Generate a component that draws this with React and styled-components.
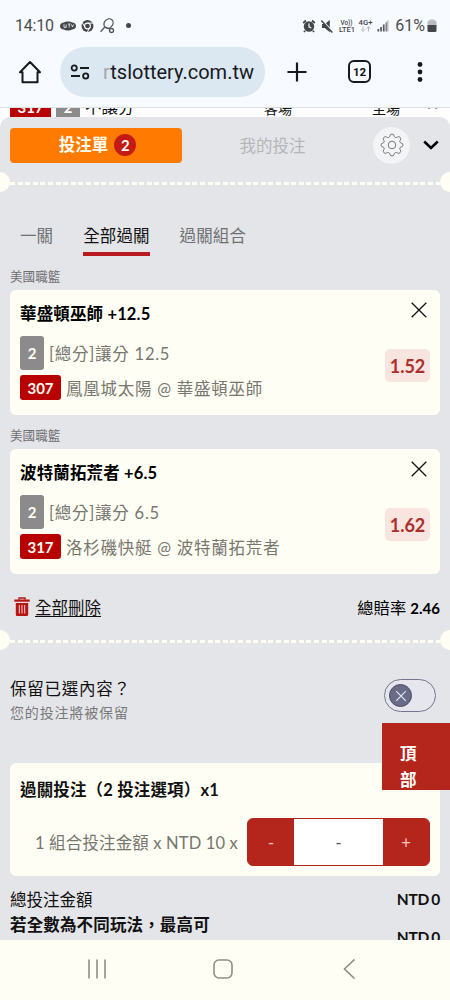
import React from 'react';
import styled, { createGlobalStyle } from 'styled-components';

const picks = [
  { league: '美國職籃', title: '華盛頓巫師 +12.5', market: '[總分]讓分 12.5', code: '307', game: '鳳凰城太陽 @ 華盛頓巫師', odds: '1.52' },
  { league: '美國職籃', title: '波特蘭拓荒者 +6.5', market: '[總分]讓分 6.5', code: '317', game: '洛杉磯快艇 @ 波特蘭拓荒者', odds: '1.62' },
];

const App = () => {
  return (
    <Phone>
      <GlobalStyle />
      <StatusBar>
        <Clock>14:10</Clock>
        <StatusIcons />
        <Signals />
        <Percent>61%</Percent>
        <Battery />
      </StatusBar>

      <BrowserBar>
        <HomeIcon />
        <UrlPill>
          <TuneIcon />
          <UrlText>
            <span>r</span>tslottery.com.tw
          </UrlText>
        </UrlPill>
        <PlusIcon />
        <TabCount>12</TabCount>
        <MoreIcon />
      </BrowserBar>

      <Page>
        <BehindRow>
          <BehindCode>317</BehindCode>
          <BehindNum>2</BehindNum>
          <BehindName>不讓分</BehindName>
          <BehindSide>客場</BehindSide>
          <BehindSide $last>主場</BehindSide>
          <BehindMarks width="14" height="10" viewBox="0 0 14 10">
            <path d="M2 .8h2.4M9 .8h2.4" stroke="#444" strokeWidth="1.4" />
          </BehindMarks>
        </BehindRow>

        <Sheet>
          <SheetHead>
            <SlipButton>
              投注單
              <CountBadge>2</CountBadge>
            </SlipButton>
            <MyBets>我的投注</MyBets>
            <GearButton>
              <GearIcon />
            </GearButton>
            <ChevronIcon />
          </SheetHead>
          <TearLine />

          <Tabs>
            <Tab>一關</Tab>
            <Tab $active>全部過關</Tab>
            <Tab>過關組合</Tab>
          </Tabs>

          {picks.map((pick) => (
            <Pick key={pick.code} {...pick} />
          ))}

          <ActionRow>
            <TrashIcon />
            <ClearAll>全部刪除</ClearAll>
            <TotalOdds>
              總賠率 <b>2.46</b>
            </TotalOdds>
          </ActionRow>
          <TearLine />

          <KeepRow>
            <div>
              <KeepTitle>保留已選內容？</KeepTitle>
              <KeepHint>您的投注將被保留</KeepHint>
            </div>
            <Toggle>
              <Knob>
                <svg width="12" height="12" viewBox="0 0 12 12">
                  <path d="M1.2 1.2l9.6 9.6M10.8 1.2l-9.6 9.6" stroke="#e6e7f2" strokeWidth="1.2" />
                </svg>
              </Knob>
            </Toggle>
          </KeepRow>

          <StakeCard>
            <StakeTitle>過關投注（2 投注選項）x1</StakeTitle>
            <StakeRow>
              <StakeLabel>1 組合投注金額 x NTD 10 x</StakeLabel>
              <Stepper>
                <StepButton>-</StepButton>
                <StepValue>-</StepValue>
                <StepButton>+</StepButton>
              </Stepper>
            </StakeRow>
          </StakeCard>

          <TotalRow>
            <span>總投注金額</span>
            <Amount>NTD 0</Amount>
          </TotalRow>
          <TotalRow $strong>
            <span>若全數為不同玩法，最高可</span>
            <Amount $low>NTD 0</Amount>
          </TotalRow>
        </Sheet>
        <TopButton>
          <span>頂</span>
          <span>部</span>
        </TopButton>
      </Page>

      <NavBar>
        <svg width="20" height="20" viewBox="0 0 20 20">
          <path d="M2 .5v19M10 .5v19M18 .5v19" stroke="#8e8d87" strokeWidth="1.6" />
        </svg>
        <svg width="20" height="20" viewBox="0 0 20 20">
          <rect x="1" y="1" width="18" height="18" rx="5" fill="none" stroke="#8e8d87" strokeWidth="1.6" />
        </svg>
        <svg width="20" height="20" viewBox="0 0 20 20">
          <path d="M15.500.5L5.500 10l10 9.500" fill="none" stroke="#8e8d87" strokeWidth="1.6" />
        </svg>
      </NavBar>
    </Phone>
  );
};

const Pick = ({ league, title, market, code, game, odds }) => {
  return (
    <>
      <League>{league}</League>
      <Card>
        <CardMain>
          <CardTitle>{title}</CardTitle>
          <MarketLine>
            <Tag>2</Tag>
            <span>{market}</span>
          </MarketLine>
          <GameLine>
            <Tag $red>{code}</Tag>
            <span>{game}</span>
          </GameLine>
        </CardMain>
        <CardSide>
          <svg width="16" height="16" viewBox="0 0 16 16">
            <path d="M.7.7l14.6 14.6M15.3.7L.7 15.3" stroke="#111" strokeWidth="1.3" />
          </svg>
          <Odds>{odds}</Odds>
        </CardSide>
      </Card>
    </>
  );
};

const StatusIcons = () => (
  <svg width="74" height="20" viewBox="0 0 74 20">
    <path d="M0 10c0-2.5 2-3.5 4-3.6C6 5.200 10 5.200 12 6.400c2.500.1 4 1.400 4 3.600s-1.500 3.500-4 3.600c-2 1.300-6 1.300-8 0-2.500-.1-4-1.300-4-3.600z" fill="#454649" />
    <path d="M4 8.200v3.200h2.200V8.500M8 8h2.500M9.200 8v3.500M11.500 8.500l1 2.500 1-2.500" stroke="#e8ebef" fill="none" strokeWidth=".9" />
    <circle cx="27.500" cy="10" r="6" fill="#454649" />
    <circle cx="27.500" cy="10" r="2.900" fill="#454649" stroke="#f7faff" strokeWidth="1.100" />
    <path d="M27.500 7.100h5.700M25 11.500l-2.800-5M30 11.500l-2.800 4.900" stroke="#f7faff" strokeWidth="1" />
    <g fill="none" stroke="#55565a" strokeWidth="1.300">
      <ellipse cx="48.500" cy="7.500" rx="5" ry="4.200" transform="rotate(-48 48.500 7.500)" />
      <path d="M44.600 11.300l-4 4.400M45 11.200l5 2" />
      <circle cx="51.500" cy="14.500" r="2" />
    </g>
    <circle cx="68.500" cy="9.500" r="2.500" fill="#454649" />
  </svg>
);

const Signals = () => (
  <SignalSvg width="90" height="20" viewBox="0 0 90 20">
    <circle cx="7" cy="10.500" r="5.200" fill="#454649" />
    <path d="M1.200 7L4 4.500M12.800 7L10 4.500M3 14.800l-1 1.200M11 14.800l1 1.200" stroke="#454649" strokeWidth="1.800" />
    <path d="M7 7.500v3.300l2.300 1.300" stroke="#f7faff" strokeWidth="1.200" fill="none" />
    <path d="M20 8h2.800l5-4v12.300l-5-4.300H20z" fill="#454649" />
    <path d="M20 4l11 12" stroke="#f7faff" strokeWidth="1.400" />
    <path d="M19.300 4.500l11 12" stroke="#454649" strokeWidth="1.500" />
    <g fill="#454649" fontFamily="Roboto, sans-serif" fontWeight="500">
      <text x="38.500" y="9" fontSize="7.500" textLength="12" lengthAdjust="spacingAndGlyphs">Vo))</text>
      <text x="37" y="15.800" fontSize="7.500" textLength="16" lengthAdjust="spacingAndGlyphs">LTE1</text>
      <text x="56.500" y="9" fontSize="7.500" textLength="14" lengthAdjust="spacingAndGlyphs">4G+</text>
    </g>
    <path d="M61 10.500v4.800m-2-2l2 2 2-2M66.500 15.500v-4.800m-2 2l2-2 2 2" stroke="#b5b8bd" fill="none" strokeWidth="1" />
    <path d="M75.500 13h1.700v2.500h-1.700zM78.200 11h1.700v4.500h-1.700zM80.900 8.500h1.700v7h-1.700zM83.600 6.500h1.200v9h-1.200z" fill="#57585c" />
    <path d="M84.800 5l1.700-1v11.500h-1.700z" fill="#b9bcc1" />
  </SignalSvg>
);

const Battery = () => (
  <svg width="10" height="14" viewBox="0 0 10 14">
    <path d="M.5 3Q.5 1.500 2 1.500h.8V.5h4.400v1H8q1.500 0 1.500 1.500v4h-9z" fill="#b9bcc1" />
    <path d="M.5 6h9v5.500Q9.500 13 8 13H2Q.5 13 .5 11.500z" fill="#454649" />
  </svg>
);

const HomeIcon = () => (
  <svg width="24" height="24" viewBox="0 0 24 24">
    <path d="M4.500 12.200H2L12 2l10 10.200h-2.500v10h-15z" fill="none" stroke="#17191c" strokeWidth="2" strokeLinejoin="round" />
  </svg>
);

const TuneIcon = () => (
  <svg width="20" height="16" viewBox="0 0 20 16">
    <g fill="none" stroke="#17191c" strokeWidth="1.800">
      <circle cx="4.200" cy="4" r="2.600" />
      <path d="M10 4h9M1 12h9" />
      <circle cx="15.700" cy="12" r="2.600" />
    </g>
  </svg>
);

const PlusIcon = () => (
  <PlusSvg width="20" height="20" viewBox="0 0 20 20">
    <path d="M10 .5v19M.5 10h19" stroke="#17191c" strokeWidth="2.200" />
  </PlusSvg>
);

const MoreIcon = () => (
  <MoreSvg width="6" height="22" viewBox="0 0 6 22">
    <circle cx="3" cy="3.500" r="2.400" />
    <circle cx="3" cy="11" r="2.400" />
    <circle cx="3" cy="18.500" r="2.400" />
  </MoreSvg>
);

const GearIcon = () => (
  <svg width="24" height="24" viewBox="0 0 24 24" fill="none" stroke="#77787b" strokeWidth="1">
    <path d="M9.800 3.200Q10 1 12 1t2.200 2.200Q14.400 4.200 15.400 4.500t1.700-.3q1.700-1.200 3 .1t.1 3q-.7.800-.3 1.700t1.100 1Q23 10.200 23 12t-2 2q-.800.1-1.100 1t.3 1.700q1.200 1.700-.1 3t-3 .1q-.8-.600-1.700-.2t-1.200 1.200Q14 23 12 23t-2.200-2.200q-.2-.8-1.200-1.200t-1.700.2q-1.700 1.200-3-.1t-.1-3q.6-.8.3-1.700t-1.100-1Q1 13.800 1 12t2-2q.8-.1 1.100-1t-.3-1.700q-1.200-1.700.1-3t3-.1q.700.600 1.700.3t1.200-1.300z" />
    <circle cx="12" cy="12" r="3.800" />
  </svg>
);

const ChevronIcon = () => (
  <ChevronSvg width="16" height="10" viewBox="0 0 16 10">
    <path d="M1.200 1.500L8 8l6.800-6.500" fill="none" stroke="#000" strokeWidth="2.500" />
  </ChevronSvg>
);

const TrashIcon = () => (
  <svg width="16" height="20" viewBox="0 0 16 20">
    <path d="M5 2.800V1h6v1.800" fill="none" stroke="#b81414" strokeWidth="1.400" />
    <path d="M.3 2.500h15.400v2.300H.300zM1.800 6h12.400v11.500q0 1.500-1.500 1.500H3.300q-1.500 0-1.500-1.500z" fill="#b81414" />
    <path d="M5.300 8v8.500M8 8v8.500M10.700 8v8.500" stroke="#f3d0d0" strokeWidth="1" />
  </svg>
);

const TearLine = () => (
  <Tear>
    <TearEnd />
    <TearDash />
    <TearEnd $right />
  </Tear>
);

const GlobalStyle = createGlobalStyle`
  * {
    box-sizing: border-box;
  }
  body {
    margin: 0;
    font-family: Lato, 'Noto Sans CJK TC', sans-serif;
    font-size: 16.5px;
    line-height: 24px;
    color: #111;
  }
  svg {
    display: block;
    flex: none;
  }
`;

const Phone = styled.div`
  width: 450px;
  height: 1000px;
  overflow: hidden;
  display: flex;
  flex-direction: column;
  background: #f7faff;
`;

const StatusBar = styled.div`
  height: 46px;
  padding: 5px 13px 0 15px;
  display: flex;
  align-items: center;
  font-family: Roboto, sans-serif;
  color: #4c4d50;
`;

const Clock = styled.span`
  width: 45px;
  font-size: 16px;
  letter-spacing: -0.2px;
`;

const SignalSvg = styled.svg`
  margin-left: auto;
`;

const Percent = styled.span`
  margin: 0 2px 0 3px;
  font-size: 16px;
`;

const BrowserBar = styled.div`
  height: 62px;
  padding: 1px 27px 11px 18px;
  display: flex;
  align-items: center;
  border-bottom: 1px solid #dcdfe3;
`;

const UrlPill = styled.div`
  width: 205px;
  height: 50px;
  margin-left: 18px;
  padding: 0 10px;
  display: flex;
  align-items: center;
  border-radius: 25px;
  background: #dbe7f1;
`;

const UrlText = styled.div`
  margin-left: 13px;
  font: 20px Roboto, sans-serif;
  color: #17191c;
  white-space: nowrap;

  span {
    color: #9da8b2;
  }
`;

const PlusSvg = styled.svg`
  margin-left: 22px;
`;

const TabCount = styled.div`
  width: 23px;
  height: 23px;
  margin-left: 41px;
  display: flex;
  align-items: center;
  justify-content: center;
  border: 2px solid #17191c;
  border-radius: 6px;
  font: 700 11.5px Roboto, sans-serif;
`;

const MoreSvg = styled.svg`
  margin-left: auto;
  fill: #17191c;
`;

const Page = styled.div`
  position: relative;
  flex: 1;
  min-height: 0;
  overflow: hidden;
  background: #fff;
`;

const BehindRow = styled.div`
  height: 9px;
  padding-left: 10px;
  display: flex;
  align-items: flex-end;
  overflow: hidden;
  line-height: 25px;
`;

const BehindCode = styled.div`
  width: 41px;
  height: 25px;
  flex: none;
  background: #b90000;
  color: #fff;
  font-size: 15px;
  font-weight: 700;
  text-align: center;
  line-height: 30px;
`;

const BehindNum = styled(BehindCode)`
  width: 24px;
  margin-left: 5px;
  background: #8b8b8b;
`;

const BehindName = styled.div`
  width: 179px;
  margin: 0 0 -3px 5px;
`;

const BehindSide = styled.div`
  width: ${({ $last }) => ($last ? '52px' : '108px')};
  margin-bottom: -4px;
  font-size: 14px;
`;

const BehindMarks = styled.svg`
  margin-left: 2px;
`;

const Sheet = styled.div`
  height: 840px;
  border-radius: 10px 10px 0 0;
  background: #e4e5e8;
`;

const SheetHead = styled.div`
  height: 55px;
  padding: 1px 11px 0 10px;
  display: flex;
  align-items: center;
`;

const SlipButton = styled.div`
  width: 172px;
  height: 35px;
  padding-left: 3px;
  display: flex;
  align-items: center;
  justify-content: center;
  gap: 6px;
  border-radius: 4px;
  background: #ff7a00;
  color: #fffef4;
  font-weight: 700;
`;

const CountBadge = styled.span`
  width: 22px;
  height: 22px;
  border-radius: 50%;
  background: #c41a16;
  font-size: 15px;
  line-height: 22px;
  text-align: center;
`;

const MyBets = styled.div`
  width: 181px;
  padding-top: 1px;
  text-align: center;
  color: #b5b6b8;
`;

const GearButton = styled.div`
  width: 37px;
  height: 37px;
  margin-left: 10px;
  display: flex;
  align-items: center;
  justify-content: center;
  border-radius: 50%;
  background: #f3f4f6;
`;

const ChevronSvg = styled.svg`
  margin-left: auto;
`;

const Tear = styled.div`
  height: 20px;
  display: flex;
  align-items: center;
`;

const TearEnd = styled.div`
  width: 10px;
  height: 20px;
  background: #fffef4;
  border-radius: ${({ $right }) => ($right ? '10px 0 0 10px' : '0 10px 10px 0')};
`;

const TearDash = styled.div`
  flex: 1;
  height: 3px;
  margin-top: 3px;
  background: repeating-linear-gradient(90deg, #fffef4 0 5px, transparent 5px 7.6px);
`;

const Tabs = styled.div`
  height: 64px;
  padding-left: 20px;
  display: flex;
  align-items: flex-end;
  gap: 30px;
`;

const Tab = styled.div`
  height: 33px;
  padding-top: 1px;
  letter-spacing: 0.1px;
  color: ${({ $active }) => ($active ? '#111' : '#6f7073')};
  border-bottom: 4px solid ${({ $active }) => ($active ? '#b81a22' : 'transparent')};
`;

const League = styled.div`
  height: 34px;
  padding: 14px 10px 0;
  font-size: 12.6px;
  line-height: 14px;
  color: #6f7073;
`;

const Card = styled.div`
  height: 125px;
  margin: 0 10px;
  padding: 10px;
  display: flex;
  justify-content: space-between;
  border-radius: 6px;
  background: #fffef4;
`;

const CardMain = styled.div`
  display: flex;
  flex-direction: column;
  align-items: flex-start;
`;

const CardTitle = styled.div`
  height: 36px;
  line-height: 29px;
  font-weight: 700;
  letter-spacing: 0.15px;
  color: #000;
`;

const MarketLine = styled.div`
  height: 34px;
  display: flex;
  align-items: center;
  gap: 5px;
  color: #77766f;
  letter-spacing: 0.75px;

  span:last-child {
    padding-top: 2px;
  }
`;

const GameLine = styled(MarketLine)`
  height: 25px;
  margin-top: 5px;
`;

const Tag = styled.span`
  align-self: stretch;
  width: ${({ $red }) => ($red ? '41px' : '24px')};
  display: flex;
  align-items: center;
  justify-content: center;
  border-radius: 3px;
  background: ${({ $red }) => ($red ? '#b90000' : '#8b8b8b')};
  color: #fffef4;
  font-size: 15px;
  font-weight: 700;
  letter-spacing: 0;
`;

const CardSide = styled.div`
  padding-top: 2px;
  display: flex;
  flex-direction: column;
  align-items: flex-end;
  justify-content: flex-start;

  svg {
    margin-right: 3px;
  }
`;

const Odds = styled.div`
  width: 45px;
  height: 33px;
  margin-top: 31px;
  border-radius: 5px;
  background: #f8e5df;
  color: #ab2f2b;
  font-size: 18px;
  font-weight: 700;
  line-height: 34px;
  text-align: center;
`;

const ActionRow = styled.div`
  height: 56px;
  padding: 12px 10px 0 14px;
  display: flex;
  align-items: center;

  svg {
    margin-top: -2px;
  }
`;

const ClearAll = styled.span`
  margin-left: 5px;
  text-decoration: underline;
  text-underline-offset: 2px;
`;

const TotalOdds = styled.span`
  margin-left: auto;
  color: #000;
  font-size: 16.3px;

  b {
    font-size: 15px;
  }
`;

const KeepRow = styled.div`
  height: 113px;
  padding: 27px 14px 0 10px;
  display: flex;
  justify-content: space-between;
`;

const KeepTitle = styled.div`
  letter-spacing: 0.75px;
`;

const KeepHint = styled.div`
  font-size: 14px;
  letter-spacing: 0.85px;
  color: #77787a;
`;

const Toggle = styled.div`
  width: 52px;
  height: 33px;
  margin-top: 2px;
  padding-left: 4px;
  display: flex;
  align-items: center;
  border: 1px solid #74758c;
  border-radius: 17px;
  background: #e6e7ee;
`;

const Knob = styled.div`
  width: 23px;
  height: 23px;
  display: flex;
  align-items: center;
  justify-content: center;
  border: 1px solid #4a4b68;
  border-radius: 50%;
  background: #6a6b87;
`;

const StakeCard = styled.div`
  height: 113px;
  margin: 0 10px;
  padding: 15px 10px 0;
  border-radius: 6px;
  background: #fffef4;
`;

const StakeTitle = styled.div`
  height: 40px;
  font-weight: 700;
  letter-spacing: 0.15px;
`;

const StakeRow = styled.div`
  display: flex;
  align-items: center;
  justify-content: flex-end;
  gap: 9px;
`;

const StakeLabel = styled.span`
  padding-top: 1px;
  color: #77766f;
  white-space: nowrap;
  letter-spacing: 0.15px;
`;

const Stepper = styled.div`
  width: 183px;
  height: 48px;
  display: flex;
  border: 1px solid #b4261c;
  border-radius: 6px;
  overflow: hidden;
  background: #b4261c;
  text-align: center;
  line-height: 48px;
`;

const StepButton = styled.div`
  width: 46px;
  color: #f0c4bc;
`;

const StepValue = styled.div`
  flex: 1;
  background: #fff;
  color: #555;
`;

const TotalRow = styled.div`
  height: 25px;
  margin-top: ${({ $strong }) => ($strong ? 0 : '12px')};
  padding: 0 10px;
  display: flex;
  justify-content: space-between;
  font-weight: ${({ $strong }) => ($strong ? 700 : 400)};
  letter-spacing: ${({ $strong }) => ($strong ? '0.15px' : 0)};
`;

const Amount = styled.span`
  margin-top: ${({ $low }) => ($low ? '12px' : '-1px')};
  font-size: 15.5px;
  font-weight: 700;
  letter-spacing: -0.2px;
  word-spacing: -1.5px;
`;

const TopButton = styled.div`
  position: absolute;
  right: 0;
  top: 615px;
  width: 68px;
  height: 67px;
  padding: 18px 0 0 18px;
  display: flex;
  flex-direction: column;
  background: #b4261c;
  color: #fff;
  font-weight: 700;
  line-height: 26px;
`;

const NavBar = styled.div`
  height: 60px;
  padding: 0 91px 2px 87px;
  display: flex;
  align-items: center;
  justify-content: space-between;
  background: #fffef4;
`;

export default App;
